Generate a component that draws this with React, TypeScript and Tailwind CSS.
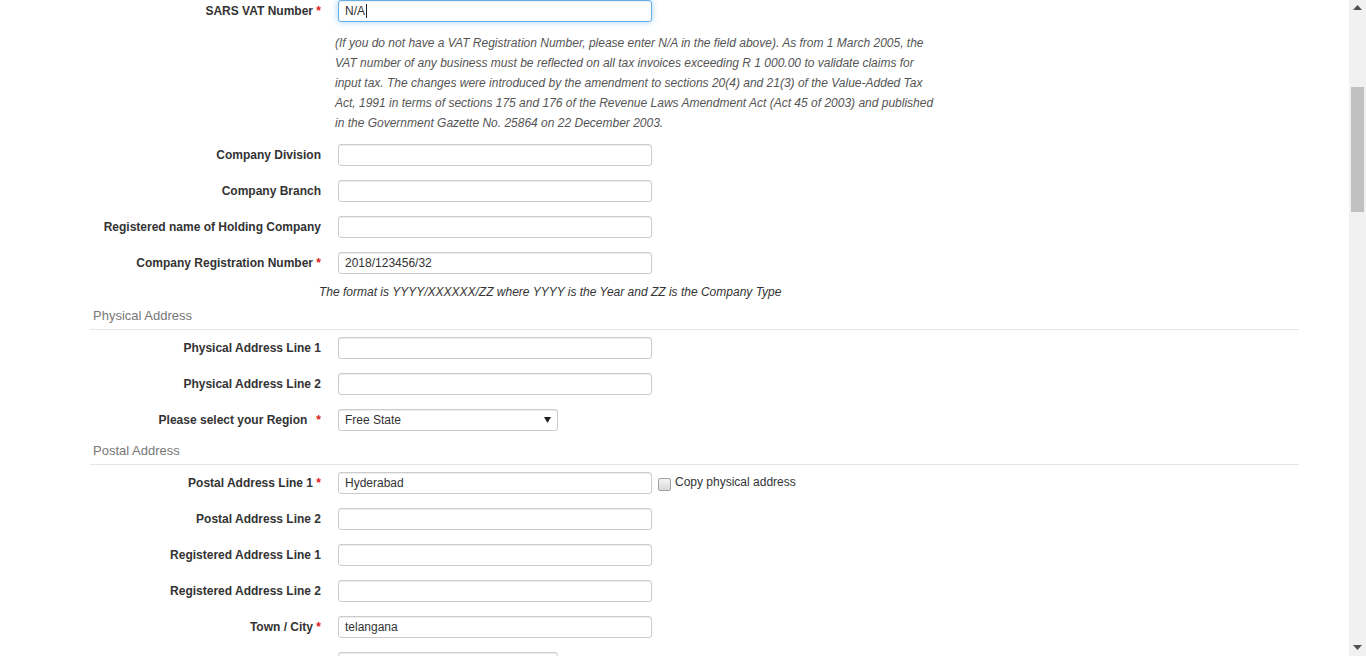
import React from "react";

const font = { fontFamily: '"Liberation Sans", Arial, sans-serif' };

function Label({ text, req, sp }: { text: string; req?: boolean; sp?: boolean }) {
  return (
    <div className="w-[248px] shrink-0 pr-[17px] text-right text-[12px] font-bold text-[#333] leading-[22px] whitespace-pre">
      {text}
      {req ? (
        sp ? (
          <span className="ml-[9px] text-[#e02020]">*</span>
        ) : (
          <span className="text-[#e02020]">{" *"}</span>
        )
      ) : null}
    </div>
  );
}

function Box({ value, w = "w-[314px]", focus }: { value?: string; w?: string; focus?: boolean }) {
  return (
    <div
      className={
        "h-[22px] rounded-[3px] border bg-white px-[6px] text-[12px] leading-[20px] text-[#333] flex items-center " +
        w +
        (focus
          ? " border-[#66afe9] shadow-[inset_0_1px_1px_rgba(0,0,0,0.075),0_0_6px_rgba(102,175,233,0.6)]"
          : " border-[#cccccc] shadow-[inset_0_1px_1px_rgba(0,0,0,0.075)]")
      }
    >
      <span>{value}</span>
      {focus ? <span className="ml-[1px] inline-block h-[14px] w-px bg-[#222]" /> : null}
    </div>
  );
}

function Select({ value }: { value?: string }) {
  return (
    <div className="h-[22px] w-[220px] rounded-[3px] border border-[#cccccc] bg-white pl-[6px] pr-[5px] text-[12px] text-[#333] flex items-center justify-between shadow-[inset_0_1px_1px_rgba(0,0,0,0.075)]">
      <span>{value}</span>
      <svg width="7" height="6" viewBox="0 0 7 6" className="mr-[1px]">
        <path d="M0 0 H7 L3.5 6 Z" fill="#222" />
      </svg>
    </div>
  );
}

function Row({ label, req, sp, children, mt = "mt-[14px]" }: { label: string; req?: boolean; sp?: boolean; children: React.ReactNode; mt?: string }) {
  return (
    <div className={"flex items-start " + mt}>
      <Label text={label} req={req} sp={sp} />
      {children}
    </div>
  );
}

function Heading({ text, mt }: { text: string; mt: string }) {
  return (
    <div className={"h-[25px] border-b border-[#e5e5e5] pl-[3px] pt-[1px] text-[13px] leading-[20px] text-[#777] " + mt}>
      {text}
    </div>
  );
}

export default function App() {
  return (
    <div className="flex h-[656px] w-[1366px] overflow-hidden bg-white" style={font}>
      <div className="w-[1349px] shrink-0 pl-[90px] pr-[50px]">
        <Row label="SARS VAT Number" req mt="mt-0">
          <Box value="N/A" focus />
        </Row>
        <div className="ml-[245px] mt-[11px] text-[12px] italic leading-[20px] text-[#555]">
          (If you do not have a VAT Registration Number, please enter N/A in the field above). As from 1 March 2005, the
          <br />
          VAT number of any business must be reflected on all tax invoices exceeding R 1 000.00 to validate claims for
          <br />
          input tax. The changes were introduced by the amendment to sections 20(4) and 21(3) of the Value-Added Tax
          <br />
          Act, 1991 in terms of sections 175 and 176 of the Revenue Laws Amendment Act (Act 45 of 2003) and published
          <br />
          in the Government Gazette No. 25864 on 22 December 2003.
        </div>
        <Row label="Company Division" mt="mt-[11px]">
          <Box />
        </Row>
        <Row label="Company Branch">
          <Box />
        </Row>
        <Row label="Registered name of Holding Company">
          <Box />
        </Row>
        <Row label="Company Registration Number" req>
          <Box value="2018/123456/32" />
        </Row>
        <div className="ml-[229px] mt-[8px] text-[12px] italic leading-[20px] text-[#333]">
          The format is YYYY/XXXXXX/ZZ where YYYY is the Year and ZZ is the Company Type
        </div>
        <Heading text="Physical Address" mt="mt-[3px]" />
        <Row label="Physical Address Line 1" mt="mt-[7px]">
          <Box />
        </Row>
        <Row label="Physical Address Line 2">
          <Box />
        </Row>
        <Row label="Please select your Region" req sp>
          <Select value="Free State" />
        </Row>
        <Heading text="Postal Address" mt="mt-[9px]" />
        <Row label="Postal Address Line 1" req mt="mt-[7px]">
          <Box value="Hyderabad" />
          <div className="ml-[6px] flex items-center">
            <div className="mt-[5px] h-[13px] w-[13px] rounded-[2px] border border-[#a0a0a0] bg-gradient-to-b from-[#f4f4f4] to-[#d8d8d8]" />
            <span className="ml-[4px] text-[12px] leading-[20px] text-[#333]">Copy physical address</span>
          </div>
        </Row>
        <Row label="Postal Address Line 2">
          <Box />
        </Row>
        <Row label="Registered Address Line 1">
          <Box />
        </Row>
        <Row label="Registered Address Line 2">
          <Box />
        </Row>
        <Row label="Town / City" req>
          <Box value="telangana" />
        </Row>
        <Row label="">
          <Select value="" />
        </Row>
      </div>
      <div className="flex h-[656px] w-[17px] shrink-0 flex-col items-center bg-[#f1f1f1]">
        <svg width="9" height="5" viewBox="0 0 9 5" className="mt-[5px]">
          <path d="M0 5 L4.5 0 L9 5 Z" fill="#505050" />
        </svg>
        <div className="mt-[77px] h-[125px] w-[13px] bg-[#c1c1c1]" />
        <div className="flex-1" />
        <svg width="9" height="5" viewBox="0 0 9 5" className="mb-[6px]">
          <path d="M0 0 L4.5 5 L9 0 Z" fill="#505050" />
        </svg>
      </div>
    </div>
  );
}
